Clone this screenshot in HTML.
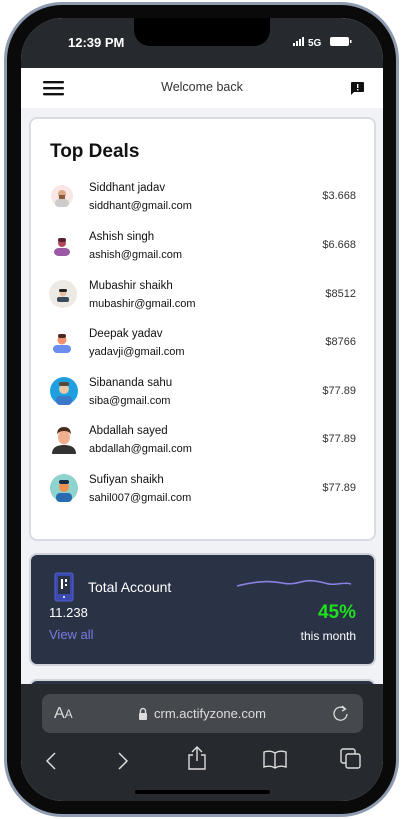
<!DOCTYPE html>
<html><head><meta charset="utf-8">
<style>
*{margin:0;padding:0;box-sizing:border-box}
body{width:403px;height:819px;background:#fff;position:relative;overflow:hidden;font-family:"Liberation Sans",sans-serif}
.frame{position:absolute;left:4px;top:2px;width:395px;height:815px;border-radius:58px;background:#0a0a0a;border:3px solid #8e9bb0}
.screen{position:absolute;left:21px;top:18px;width:362px;height:783px;border-radius:42px;overflow:hidden;background:#f0f2f6}
.status{position:absolute;left:0;top:0;width:362px;height:50px;background:#262a2e}
.notch{position:absolute;left:113px;top:0;width:136px;height:28px;background:#000;border-radius:0 0 16px 16px}
.time{position:absolute;left:47px;top:17px;color:#fff;font-weight:bold;font-size:13px}
.header{position:absolute;left:0;top:50px;width:362px;height:40px;background:#fff}
.card{position:absolute;left:8px;top:99px;width:347px;height:424px;background:#fff;border:2px solid #d8dbe1;border-radius:8px}
.row{position:absolute;left:0;width:347px;height:40px}
.av{position:absolute;left:20px;top:4px}
.nm{position:absolute;left:58px;top:1px;font-size:11.5px;color:#111}
.em{position:absolute;left:58px;top:19px;font-size:11px;color:#111}
.pr{position:absolute;right:22px;top:9px;font-size:11px;color:#333}
.dark{position:absolute;left:8px;top:535px;width:347px;height:113px;background:#2a3346;border:2px solid #d0d4da;border-radius:8px}
.dark2{position:absolute;left:8px;top:661px;width:347px;height:30px;background:#2a3346;border:2px solid #d0d4da;border-radius:8px}
.browser{position:absolute;left:0;top:666px;width:362px;height:117px;background:#26292d}
.url{position:absolute;left:21px;top:10px;width:321px;height:39px;background:#45484c;border-radius:8px;color:#fff}
</style></head><body>
<div class="frame"></div>
<div class="screen">
 <div class="status">
  <div class="notch"></div>
  <div class="time">12:39 PM</div>
  <svg style="position:absolute;left:272px;top:18px" width="65" height="12">
   <rect x="0" y="7" width="2" height="3" fill="#fff"/><rect x="3" y="5" width="2" height="5" fill="#fff"/><rect x="6" y="3" width="2" height="7" fill="#fff"/><rect x="9" y="1" width="2" height="9" fill="#fff"/>
   <text x="15" y="10" fill="#fff" font-size="10" font-weight="bold" font-family="Liberation Sans">5G</text>
   <rect x="37" y="1" width="19" height="9" rx="2" fill="#fff"/><rect x="57" y="4" width="1.5" height="3" fill="#fff"/>
  </svg>
 </div>
 <div class="header">
  <svg style="position:absolute;left:22px;top:13px" width="21" height="15"><rect y="0" width="21" height="2.4" rx="1" fill="#111"/><rect y="6" width="21" height="2.4" rx="1" fill="#111"/><rect y="12" width="21" height="2.4" rx="1" fill="#111"/></svg>
  <div style="position:absolute;left:0;width:362px;top:12px;text-align:center;font-size:12.5px;color:#333">Welcome back</div>
  <svg style="position:absolute;left:330px;top:14px" width="13" height="13"><path d="M0 1Q0 0 1 0H12Q13 0 13 1V9Q13 10 12 10H3L0 13Z" fill="#111"/><rect x="6" y="2" width="1.4" height="4" fill="#fff"/><rect x="6" y="7" width="1.4" height="1.4" fill="#fff"/></svg>
 </div>
 <div class="card">
  <div style="position:absolute;left:19px;top:22px;font-size:19px;font-weight:bold;color:#111">Top Deals</div>
  <div class="row" style="top:62px"><svg class="av" width="22" height="22"><circle cx="11" cy="11" r="11" fill="#fbe6e6"/><rect x="4" y="14" width="14" height="8" rx="4" fill="#ccc"/><circle cx="11" cy="9" r="4" fill="#d7a98a"/><rect x="8" y="10" width="6" height="4" fill="#8a5a3a"/></svg><div class="nm">Siddhant jadav</div><div class="em">siddhant@gmail.com</div><div class="pr">$3.668</div></div>
  <div class="row" style="top:111px"><svg class="av" width="22" height="22"><rect x="3" y="14" width="16" height="8" rx="5" fill="#9a5aa4"/><circle cx="11" cy="9" r="4" fill="#b04a5a"/><rect x="7" y="4" width="8" height="4" rx="2" fill="#5a2030"/></svg><div class="nm">Ashish singh</div><div class="em">ashish@gmail.com</div><div class="pr">$6.668</div></div>
  <div class="row" style="top:160px"><svg class="av" style="left:18px;top:1px" width="28" height="28"><circle cx="14" cy="14" r="14" fill="#ede9e3"/><rect x="8" y="17" width="12" height="5" rx="2" fill="#3a4a5a"/><circle cx="14" cy="13" r="3.5" fill="#e8c0a0"/><rect x="10" y="9" width="8" height="3" rx="1.5" fill="#222"/></svg><div class="nm">Mubashir shaikh</div><div class="em">mubashir@gmail.com</div><div class="pr">$8512</div></div>
  <div class="row" style="top:208px"><svg class="av" width="22" height="22"><rect x="2" y="14" width="18" height="8" rx="4" fill="#6a8ef0"/><circle cx="11" cy="9" r="4.5" fill="#f09070"/><rect x="7" y="3" width="8" height="4" rx="2" fill="#4a2a20"/></svg><div class="nm">Deepak yadav</div><div class="em">yadavji@gmail.com</div><div class="pr">$8766</div></div>
  <div class="row" style="top:257px"><svg class="av" style="left:19px;top:1px" width="28" height="28"><circle cx="14" cy="14" r="14" fill="#1ea0e0"/><rect x="6" y="19" width="16" height="9" rx="4" fill="#3a78c8"/><circle cx="14" cy="12" r="5" fill="#e8c8a8"/><rect x="9" y="5" width="10" height="4" rx="2" fill="#5a4a3a"/></svg><div class="nm">Sibananda sahu</div><div class="em">siba@gmail.com</div><div class="pr">$77.89</div></div>
  <div class="row" style="top:305px"><svg class="av" style="left:19px;top:0" width="28" height="30"><path d="M2 30Q2 21 14 21Q26 21 26 30Z" fill="#333"/><ellipse cx="14" cy="13" rx="6" ry="7.5" fill="#f0b090"/><path d="M7 11Q7 3 14 3Q21 3 21 11Q20 7 14 7Q8 7 7 11Z" fill="#4a2a1a"/></svg><div class="nm">Abdallah sayed</div><div class="em">abdallah@gmail.com</div><div class="pr">$77.89</div></div>
  <div class="row" style="top:354px"><svg class="av" style="left:19px;top:1px" width="28" height="28"><circle cx="14" cy="14" r="14" fill="#8ed4cc"/><rect x="6" y="19" width="16" height="9" rx="4" fill="#2a6ab0"/><circle cx="14" cy="13" r="5" fill="#f09050"/><rect x="9" y="6" width="10" height="4" rx="2" fill="#1a2a4a"/></svg><div class="nm">Sufiyan shaikh</div><div class="em">sahil007@gmail.com</div><div class="pr">$77.89</div></div>
 </div>
 <div class="dark">
  <svg style="position:absolute;left:23px;top:17px" width="20" height="30"><rect x="1" y="1" width="18" height="28" rx="2" fill="#3a4ab0" stroke="#5060d0"/><rect x="4" y="4" width="12" height="18" fill="#2a3346"/><rect x="7" y="7" width="2" height="10" fill="#fff"/><rect x="11" y="7" width="2" height="3" fill="#fff"/><rect x="11" y="12" width="2" height="2" fill="#fff"/><circle cx="10" cy="25" r="1" fill="#fff"/></svg>
  <div style="position:absolute;left:57px;top:24px;color:#fff;font-size:14px">Total Account</div>
  <div style="position:absolute;left:18px;top:50px;color:#fff;font-size:13px">11.238</div>
  <div style="position:absolute;left:18px;top:72px;color:#7a7ae0;font-size:13px">View all</div>
  <svg style="position:absolute;left:206px;top:22px" width="115" height="12"><path d="M0 9C15 5 30 3 45 6S65 2 78 4 90 8 100 7 110 6 114 7" stroke="#8a80e0" stroke-width="1.6" fill="none"/></svg>
  <div style="position:absolute;right:18px;top:47px;color:#1ee01e;font-size:19px;font-weight:bold">45%</div>
  <div style="position:absolute;right:18px;top:74px;color:#fff;font-size:12px">this month</div>
 </div>
 <div class="dark2"></div>
 <div class="browser">
  <div class="url">
   <div style="position:absolute;left:12px;top:11px;font-size:16px;color:#ddd">A<span style="font-size:12px">A</span></div>
   <svg style="position:absolute;left:96px;top:13px" width="10" height="13"><path d="M2.5 6V4a2.5 2.5 0 0 1 5 0v2" stroke="#ddd" stroke-width="1.4" fill="none"/><rect x="1" y="6" width="8" height="7" rx="1" fill="#ddd"/></svg>
   <div style="position:absolute;left:112px;top:12px;font-size:13px;color:#ddd">crm.actifyzone.com</div>
   <svg style="position:absolute;left:291px;top:11px" width="16" height="17"><path d="M12 4A6.5 6.5 0 1 0 14 9" stroke="#ddd" stroke-width="1.3" fill="none"/><path d="M9 1L12.5 4L9 6" stroke="#ddd" stroke-width="1.3" fill="none"/></svg>
  </div>
  <svg style="position:absolute;left:24px;top:68px" width="12" height="18"><path d="M10 1L2 9L10 17" stroke="#ddd" stroke-width="1.5" fill="none"/></svg>
  <svg style="position:absolute;left:96px;top:68px" width="12" height="18"><path d="M2 1L10 9L2 17" stroke="#ddd" stroke-width="1.5" fill="none"/></svg>
  <svg style="position:absolute;left:166px;top:62px" width="20" height="24"><path d="M6 9H2V23H18V9H14" stroke="#ddd" stroke-width="1.4" fill="none"/><path d="M10 15V1M5 6L10 1L15 6" stroke="#ddd" stroke-width="1.4" fill="none"/></svg>
  <svg style="position:absolute;left:242px;top:66px" width="24" height="19"><path d="M12 3Q7 0 1 2V17Q7 15 12 18Q17 15 23 17V2Q17 0 12 3ZM12 3V18" stroke="#ddd" stroke-width="1.4" fill="none"/></svg>
  <svg style="position:absolute;left:319px;top:64px" width="22" height="22"><rect x="1" y="1" width="14" height="14" rx="2" stroke="#ddd" stroke-width="1.4" fill="#26292d"/><rect x="6" y="6" width="14" height="14" rx="2" stroke="#ddd" stroke-width="1.4" fill="#26292d"/></svg>
  <div style="position:absolute;left:114px;top:106px;width:135px;height:4px;border-radius:2px;background:#000"></div>
 </div>
</div>
</body></html>
